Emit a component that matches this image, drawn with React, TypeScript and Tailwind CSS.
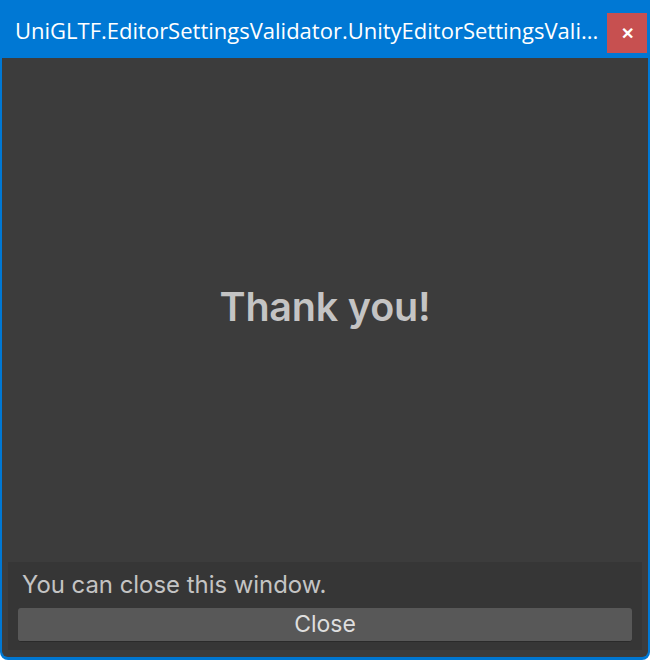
import React from "react";

const App = () => {
  return (
    <div className="w-[650px] h-[660px] bg-[#0078d4] rounded-b-[8px] flex flex-col overflow-hidden">
      {/* title bar */}
      <div className="h-[58px] flex items-center pl-[15px] pr-[3px] shrink-0">
        <div
          className="flex-1 min-w-0 text-white text-[22px] whitespace-nowrap overflow-hidden pt-[3px]"
          style={{ fontFamily: '"Open Sans", "Noto Sans", sans-serif' }}
        >
          UniGLTF.EditorSettingsValidator.UnityEditorSettingsVali...
        </div>
        <div className="w-[40px] h-[40px] bg-[#c75050] flex items-center justify-center text-white text-[16px] font-bold mt-[8px] ml-[2px]">
          ✕
        </div>
      </div>

      {/* body */}
      <div
        className="flex-1 mx-[2px] mb-[3px] bg-[#3c3c3c] rounded-b-[6px] flex flex-col"
        style={{ fontFamily: "Inter, sans-serif" }}
      >
        <div className="flex-1 flex items-center justify-center pb-[4px]">
          <span className="text-[39.5px] font-semibold text-[#c4c4c4] tracking-[-0.2px]">Thank you!</span>
        </div>
        <div className="mx-[6px] mb-[7px] bg-[#363636] px-[10px] pt-[8px] pb-[8px] flex flex-col">
          <div className="text-[23.9px] text-[#c4c4c4] pl-[4px] leading-[30px] mb-[8px]">You can close this window.</div>
          <div className="h-[34px] bg-[#585858] rounded-[3px] border-b border-[#2a2a2a] flex items-center justify-center text-[23px] text-[#dedede]">
            Close
          </div>
        </div>
      </div>
    </div>
  );
};

export default App;
